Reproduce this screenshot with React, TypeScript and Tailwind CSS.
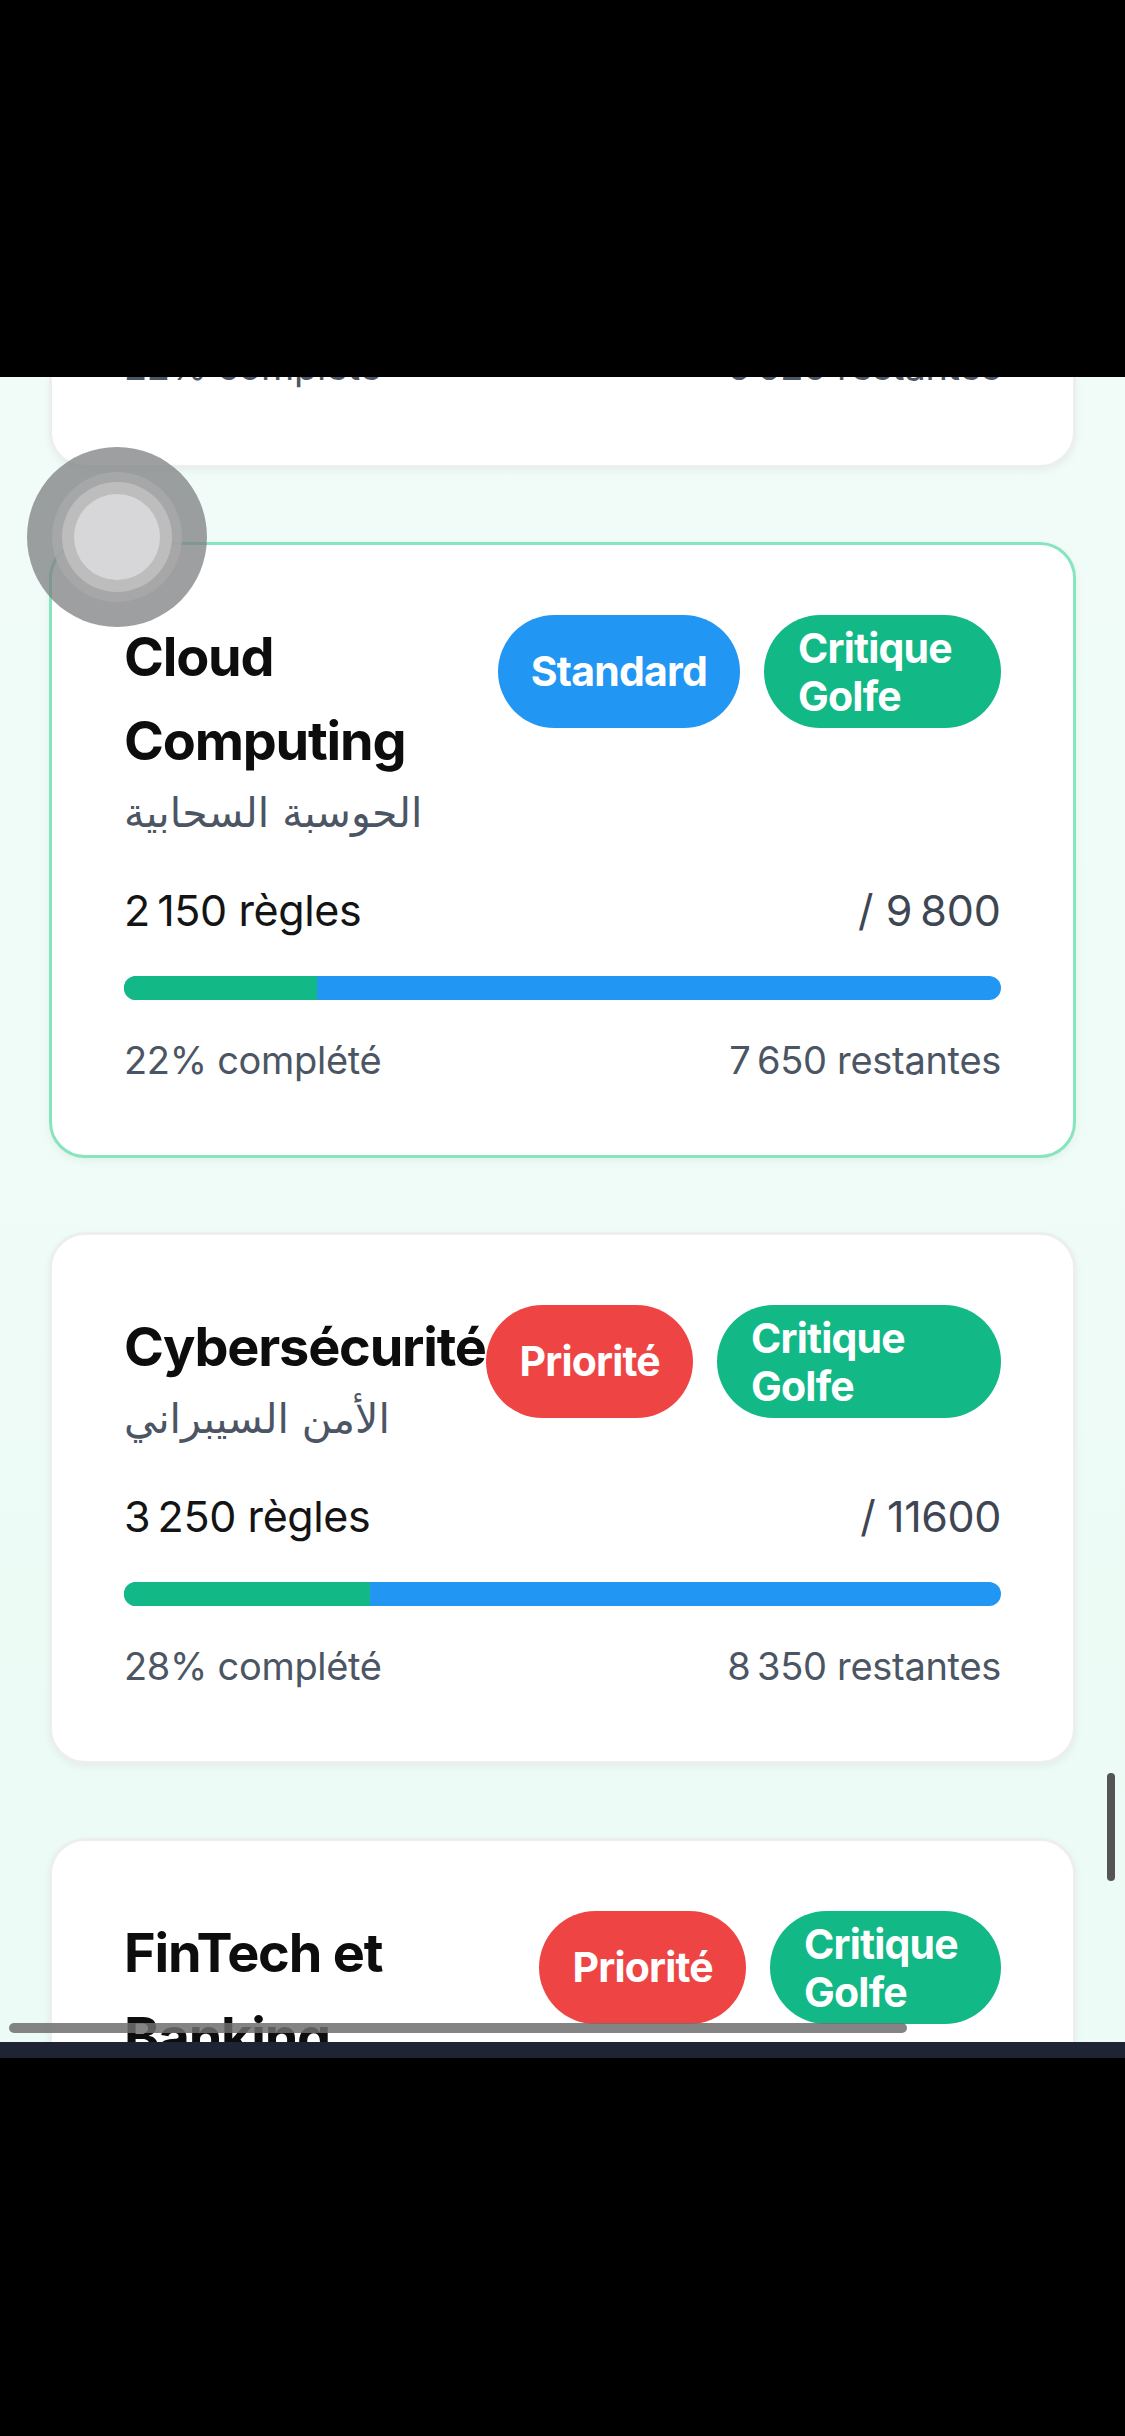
import React from "react";

interface Domain {
    title: string
    arabic: string
    done: string
    total: string
    pct: number
    left: string
    tag: "Standard" | "Priorité"
    critiqueWidth: number
    active?: boolean
}

const domains: Domain[] = [
    {
        title: "Cloud Computing",
        arabic: "الحوسبة السحابية",
        done: "2\u202F150",
        total: "9\u202F800",
        pct: 22,
        left: "7\u202F650",
        tag: "Standard",
        critiqueWidth: 237,
        active: true,
    },
    {
        title: "Cybersécurité",
        arabic: "الأمن السيبراني",
        done: "3\u202F250",
        total: "11600",
        pct: 28,
        left: "8\u202F350",
        tag: "Priorité",
        critiqueWidth: 284,
    },
    {
        title: "FinTech et Banking",
        arabic: "التكنولوجيا المالية",
        done: "1\u202F900",
        total: "8\u202F400",
        pct: 23,
        left: "6\u202F500",
        tag: "Priorité",
        critiqueWidth: 231,
    },
]

const latin = { fontFamily: "Inter, 'Liberation Sans', sans-serif" }
const arabicFont = { fontFamily: "'DejaVu Sans', 'Noto Sans', sans-serif" }

const Card: React.FC<{ d: Domain }> = ({ d }) => {
    const tagColor = d.tag === "Standard" ? "bg-[#2196f3]" : "bg-[#ef4444]"
    return (
        <div
            className={`bg-white rounded-[36px] border-[3px] pt-[70px] px-[72px] pb-[65px] shadow-[0_3px_8px_rgba(0,0,0,0.05)] ${d.active ? "border-[#86e5bf]" : "border-[#eceeef]"}`}>
            <div className="flex items-start">
                <div className="flex-1 min-w-0">
                    <div className="text-[54px] leading-[84px] font-bold tracking-[-1.2px] text-[#0d0d0d]">{d.title}</div>
                    <div dir="rtl" className="text-[41px] leading-[60px] text-[#4b5563] text-left w-fit" style={arabicFont}>{d.arabic}</div>
                </div>
                <div className="flex gap-[24px] shrink-0">
                    <div className={`${tagColor} h-[113px] rounded-full px-[33px] flex items-center text-white text-[41px] font-bold tracking-[-0.8px]`}>
                        {d.tag}
                    </div>
                    <div
                        className="bg-[#12b886] h-[113px] rounded-full px-[34px] flex items-center text-white text-[41px] leading-[48px] font-bold tracking-[-0.8px]"
                        style={{ width: d.critiqueWidth }}>
                        Critique Golfe
                    </div>
                </div>
            </div>
            <div className="mt-[34px] h-[66px] flex items-center justify-between text-[43px] tracking-[-0.4px]">
                <span className="text-[#141414]">{d.done} règles</span>
                <span className="text-[#3f4653]">/ {d.total}</span>
            </div>
            <div className="mt-[33px] h-[24px] rounded-full bg-[#2196f3] overflow-hidden flex">
                <div className="h-full bg-[#12b886]" style={{ width: `${d.pct}%` }} />
            </div>
            <div className="mt-[30px] h-[60px] flex items-center justify-between text-[38px] tracking-[-0.3px] text-[#4b5563]">
                <span>{d.pct}% complété</span>
                <span>{d.left} restantes</span>
            </div>
        </div>
    )
}

export default function App() {
    return (
        <div className="relative w-[1125px] h-[2436px] bg-black overflow-hidden flex flex-col" style={latin}>
            <div className="h-[377px] shrink-0 bg-black" />
            <div className="h-[1665px] shrink-0 overflow-hidden bg-gradient-to-b from-[#f1fcf8] to-[#ecfbf5]">
                <div className="px-[49px] flex flex-col gap-[74px]">
                    {/* bottom of the previous card, scrolled out of view */}
                    <div className="h-[91px] bg-white rounded-b-[36px] border-[3px] border-t-0 border-[#eceeef] px-[72px] shadow-[0_3px_8px_rgba(0,0,0,0.05)]">
                        <div className="-mt-[41px] h-[60px] flex items-center justify-between text-[38px] tracking-[-0.3px] text-[#4b5563]">
                            <span>22% complété</span>
                            <span>6{"\u202F"}620 restantes</span>
                        </div>
                    </div>
                    {domains.map((d) => (
                        <Card key={d.title} d={d} />
                    ))}
                </div>
            </div>
            <div className="h-[16px] shrink-0 bg-[#1e2433]" />
            <div className="flex-1 bg-black" />

            {/* assistive touch button */}
            <div className="absolute left-[27px] top-[447px] w-[180px] h-[180px] rounded-full bg-[#7d7f80]/75 flex items-center justify-center">
                <div className="w-[130px] h-[130px] rounded-full bg-[#a9a9aa]/80 flex items-center justify-center">
                    <div className="w-[110px] h-[110px] rounded-full bg-[#bdbdbe] flex items-center justify-center">
                        <div className="w-[86px] h-[86px] rounded-full bg-[#d7d7d9]" />
                    </div>
                </div>
            </div>

            {/* scroll indicators */}
            <div className="absolute left-[9px] top-[2023px] w-[898px] h-[10px] rounded-full bg-[#6f6f6f]/85" />
            <div className="absolute left-[1107px] top-[1773px] w-[8px] h-[108px] rounded-full bg-[#555]" />
        </div>
    )
}
